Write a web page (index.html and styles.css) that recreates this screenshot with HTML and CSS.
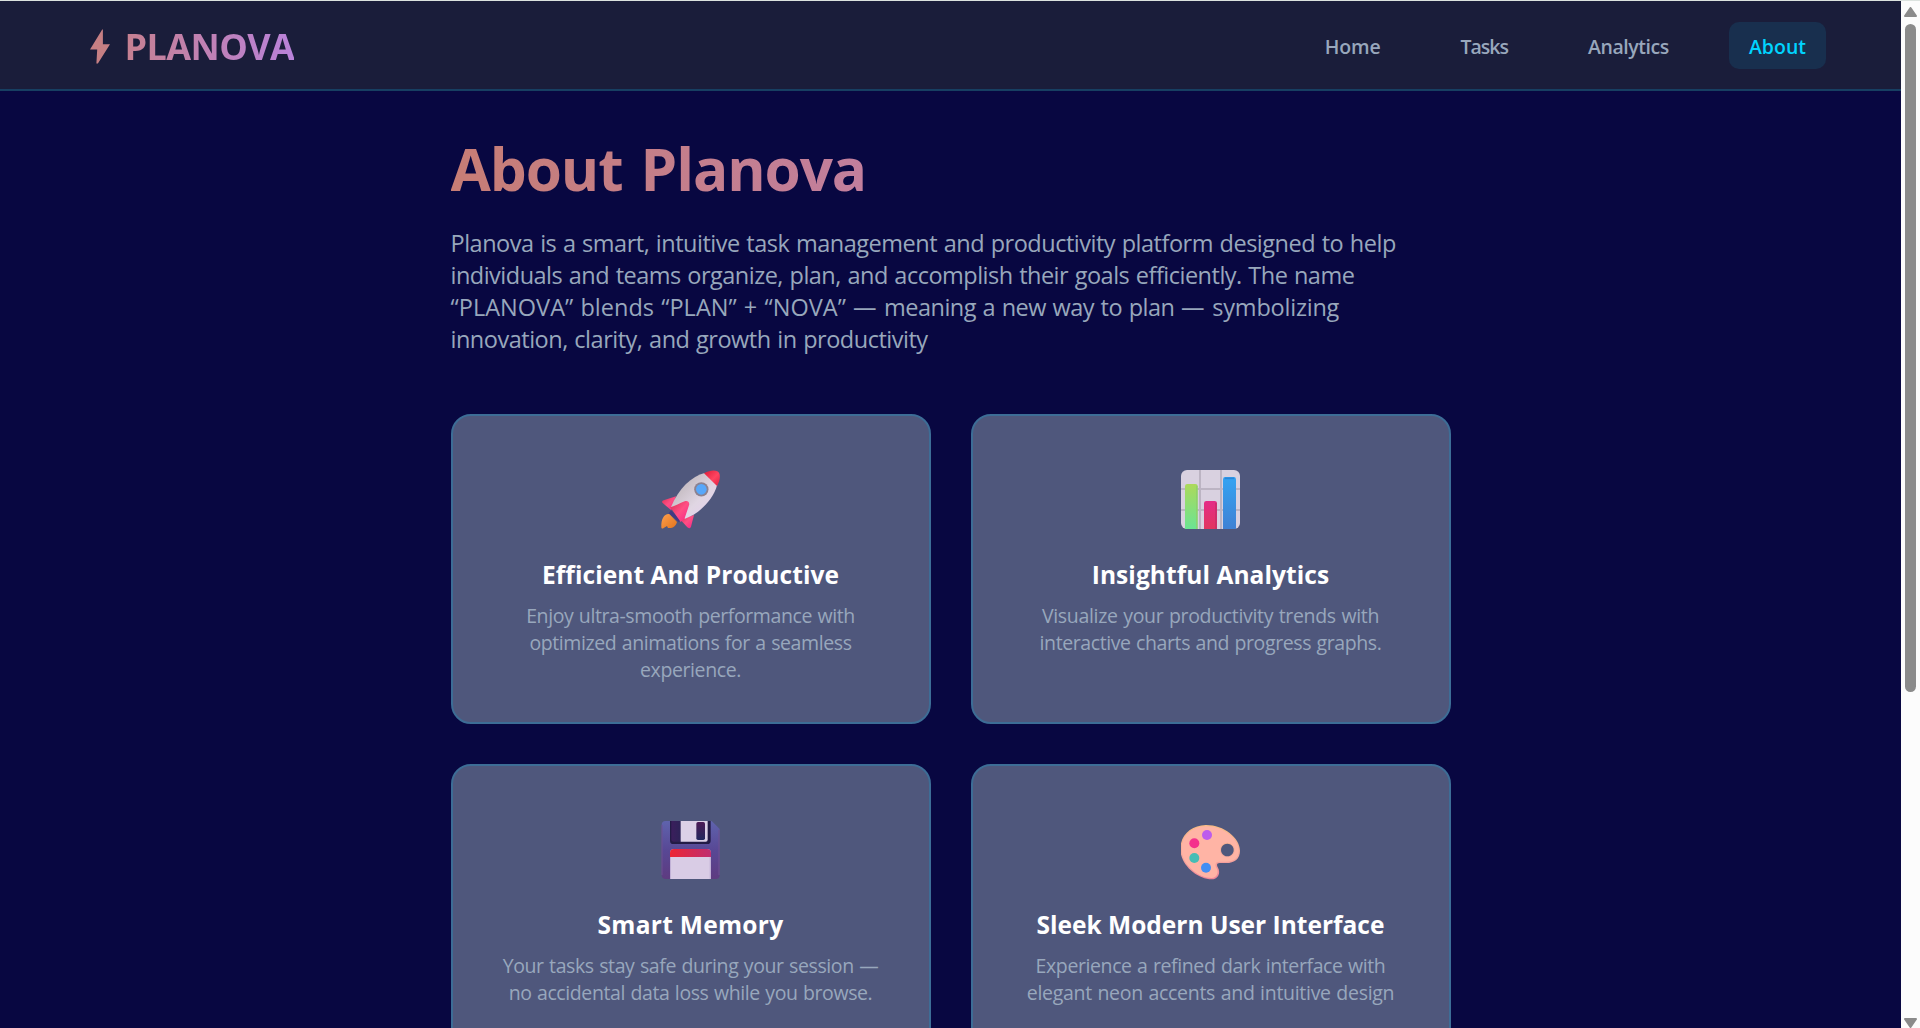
FILE: index.html
```html
<!DOCTYPE html>
<html lang="en">
<head>
<meta charset="utf-8">
<title>Planova</title>
<link rel="stylesheet" href="styles.css">
</head>
<body>
<div class="viewport">
  <div class="page">
    <header class="navbar">
      <div class="brand">
        <svg class="brand-bolt" viewBox="0 0 20 36"><path d="M12.2.6 0 20.6h7.2L6.400 34.600h1.500L20 15.200h-7.100V.6z" fill="#c67f83"/></svg>
        <span class="brand-name">PLANOVA</span>
      </div>
      <nav class="links">
        <a class="link link-home">Home</a>
        <a class="link link-tasks">Tasks</a>
        <a class="link link-analytics">Analytics</a>
        <a class="link link-about active">About</a>
      </nav>
    </header>
    <main class="about">
      <h1 class="heading">About Planova</h1>
      <p class="intro">
        Planova is a smart, intuitive task management and productivity platform designed to help<br>
        <span class="intro-goals">individuals and teams organize, plan, and accomplish their goals efficiently. The name</span><br>
        <span class="intro-name">“PLANOVA” blends “PLAN” + “NOVA” </span><span class="dash">—</span><span class="intro-meaning"> meaning a new way to plan </span><span class="dash">—</span><span class="intro-symbol"> symbolizing</span><br>
        innovation, clarity, and growth in productivity
      </p>
      <section class="cards">
        <article class="card">
          <svg class="icon" viewBox="63 60 180 180">
            <defs>
              <linearGradient id="hull" x1="0" y1="0" x2="1" y2="1"><stop offset=".25" stop-color="#c5bcc2"/><stop offset=".6" stop-color="#e0d6e3"/><stop offset="1" stop-color="#e6cff0"/></linearGradient>
              <linearGradient id="fin" x1="0" y1="0" x2="1" y2="1"><stop offset="0" stop-color="#d92f52"/><stop offset=".5" stop-color="#ff4f84"/><stop offset="1" stop-color="#f52588"/></linearGradient>
              <linearGradient id="nose" x1="0" y1="0" x2="1" y2="1"><stop offset="0" stop-color="#dc1d38"/><stop offset=".55" stop-color="#ff4460"/><stop offset="1" stop-color="#df2142"/></linearGradient>
              <linearGradient id="flame" x1="0" y1="0" x2="1" y2="1"><stop offset="0" stop-color="#ffa04c"/><stop offset="1" stop-color="#e0731c"/></linearGradient>
            </defs>
            <path d="M88 192c-15-2-25 14-24 40 0 4 4 5 7 2l10-6 3 6c13 2 24-5 27-18z" fill="url(#flame)"/>
            <path d="M86 190l30 26 7-5-30-30z" fill="#413a83"/>
            <path d="M108 139l-37 12c-5 2-6 5-3 8l26 22z" fill="url(#fin)"/>
            <path d="M162 195l-9 35c-2 5-7 6-11 2l-22-24z" fill="url(#fin)"/>
            <path d="M194 69c-38 9-78 46-101 102l42 35c42-14 85-57 96-100-4-18-17-32-37-37z" fill="url(#hull)"/>
            <path d="M192 70c16-9 32-10 40-6 10 4 11 25-1 44z" fill="url(#nose)"/>
            <path d="M91 172c15-4 28-12 43-18 9-3 16 3 13 12l-13 39-12 11z" fill="url(#fin)"/>
            <circle cx="184" cy="118" r="21.500" fill="#8c8291"/>
            <circle cx="184" cy="118" r="16" fill="#58a7fa"/>
          </svg>
          <h2 class="title title-efficient">Efficient And Productive</h2>
          <p class="desc">Enjoy ultra-smooth performance with<br>optimized animations for a seamless<br>experience.</p>
        </article>
        <article class="card">
          <svg class="icon" viewBox="63 60 180 180">
            <defs>
              <linearGradient id="green" x2="0" y2="1"><stop stop-color="#acd95b"/><stop offset="1" stop-color="#6be493"/></linearGradient>
              <linearGradient id="pink" x2="0" y2="1"><stop stop-color="#e42c87"/><stop offset="1" stop-color="#e1365f"/></linearGradient>
              <linearGradient id="blue" x2="0" y2="1"><stop stop-color="#34a3f2"/><stop offset="1" stop-color="#3f81d4"/></linearGradient>
            </defs>
            <rect x="63" y="60" width="177" height="177" rx="18" fill="#d9d1e0"/>
            <path d="M120 60v177M183 60v177M63 117h177M63 180h177" stroke="#bcb4c3" stroke-width="6"/>
            <path d="M75 237V109q0-7 7-7h24q7 0 7 7v128z" fill="url(#green)"/>
            <path d="M132 237v-77q0-7 7-7h25q7 0 7 7v77z" fill="url(#pink)"/>
            <path d="M189 237V88q0-7 7-7h25q7 0 7 7v149z" fill="url(#blue)"/>
            <path d="M110.500 107v130" stroke="#8fd06b" stroke-width="4"/>
            <path d="M168 158v79" stroke="#c62d68" stroke-width="4"/>
            <path d="M194 85h29" stroke="#2a86d9" stroke-width="5"/>
          </svg>
          <h2 class="title title-insightful">Insightful Analytics</h2>
          <p class="desc"><span class="desc-trends">Visualize your productivity trends with</span><br>interactive charts and progress graphs.</p>
        </article>
        <article class="card">
          <svg class="icon" viewBox="63 60 180 180">
            <defs>
              <linearGradient id="disk" x2="0" y2="1"><stop stop-color="#5f63ad"/><stop offset=".5" stop-color="#584895"/><stop offset="1" stop-color="#5e3b80"/></linearGradient>
              <linearGradient id="label"><stop stop-color="#ed2534"/><stop offset="1" stop-color="#bf2d70"/></linearGradient>
              <linearGradient id="shutter"><stop stop-color="#3b1e5c"/><stop offset="1" stop-color="#2c2357"/></linearGradient>
              <linearGradient id="slot" x2="0" y2="1"><stop stop-color="#4c1a55"/><stop offset="1" stop-color="#22285e"/></linearGradient>
            </defs>
            <path d="M77 63h138l24 24v138q0 12-12 12H77q-12 0-12-12V75q0-12 12-12z" fill="url(#disk)"/>
            <path d="M66 75v150M237 90v135" stroke="#6d5191" stroke-width="3"/>
            <path d="M90 63h122v59q0 10-10 10H100q-10 0-10-10z" fill="#231b46"/>
            <path d="M94 63h30v62h-22q-8 0-8-8z" fill="url(#shutter)"/>
            <path d="M122 63h81v56q0 6-6 6h-75z" fill="#dcd1e7"/>
            <rect x="169" y="66" width="26" height="54" rx="5" fill="url(#slot)"/>
            <path d="M90 237v-78q0-12 12-12h99q12 0 12 12v78z" fill="#c1b1d6"/>
            <path d="M90 171v-12q0-12 12-12h99q12 0 12 12v12z" fill="url(#label)"/>
            <path d="M93 171h116v66H93z" fill="#d9cce5"/>
          </svg>
          <h2 class="title title-memory">Smart Memory</h2>
          <p class="desc">Your tasks stay safe during your session —<br>no accidental data loss while you browse.</p>
        </article>
        <article class="card">
          <svg class="icon" viewBox="63 60 180 180">
            <defs>
              <linearGradient id="rim" x2="0" y2="1"><stop stop-color="#f8bc84"/><stop offset=".6" stop-color="#f5a79d"/><stop offset="1" stop-color="#ee8599"/></linearGradient>
            </defs>
            <path fill-rule="evenodd" d="M137 75c53-1 103 38 103 77 0 24-16 37-42 37h-19c-9 0-10 7-5 14 8 14 2 35-19 35-42 0-94-42-94-91 0-43 34-71 76-72zM202 131a19 19 0 1 0 .1 0z" fill="url(#rim)"/>
            <path fill-rule="evenodd" d="M137 79c51-1 99 36 99 73 0 22-15 33-38 33h-20c-13 0-14 11-8 20 7 12 1 29-15 29-40 0-90-40-90-87 0-40 32-67 72-68zM202 128a22 22 0 1 0 .1 0z" fill="#ffb4a5"/>
            <circle cx="141" cy="105" r="15" fill="#bd5cec"/>
            <circle cx="103" cy="130" r="15" fill="#f4318c"/>
            <circle cx="103" cy="174" r="15" fill="#45bdb5"/>
            <circle cx="138" cy="203" r="15" fill="#438ef3"/>
          </svg>
          <h2 class="title title-interface">Sleek Modern User Interface</h2>
          <p class="desc">Experience a refined dark interface with<br><span class="desc-neon">elegant neon accents and intuitive design</span></p>
        </article>
      </section>
    </main>
  </div>
  <div class="scrollbar">
    <svg class="arrow" viewBox="0 0 13 10"><path d="M6.500 1 12 9H1z" fill="#8b8b8b" stroke="#8b8b8b" stroke-width="2" stroke-linejoin="round"/></svg>
    <div class="thumb"></div>
    <svg class="arrow arrow-down" viewBox="0 0 13 10"><path d="M6.500 9 12 1H1z" fill="#8b8b8b" stroke="#8b8b8b" stroke-width="2" stroke-linejoin="round"/></svg>
  </div>
</div>
</body>
</html>
```

FILE: styles.css
```css
* { box-sizing: border-box; margin: 0; padding: 0; }
body { height: 1028px; overflow: hidden; background: #080741; font-family: "Open Sans", "Noto Sans", sans-serif; }
.viewport { display: flex; height: 1028px; border-top: 1px solid #dce3df; }
.page { flex: 1; overflow: hidden; background: #080741; }

.navbar { display: flex; justify-content: space-between; align-items: center; height: 90px; padding: 0 75px 0 90px; background: #1a1d3a; border-bottom: 2px solid #173f62; }
.brand { display: flex; align-items: center; gap: 14.5px; padding-top: 4px; }
.brand-bolt { width: 20px; height: 36px; }
.brand-name { font-size: 36px; font-weight: 700; line-height: 48px; letter-spacing: -0.6px; background: linear-gradient(90deg, #c68091, #b982da); -webkit-background-clip: text; background-clip: text; color: transparent; }
.links { display: flex; gap: 40px; margin-top: 1px; }
.link { padding: 11px 20px 9px; border-radius: 10px; color: #98a7bc; font-size: 19.5px; font-weight: 600; line-height: 27px; }
.link-home { letter-spacing: -0.2px; }
.link-tasks { letter-spacing: -1px; }
.link-analytics { letter-spacing: -0.42px; }
.link.active { background: #182f4e; color: #00d4ff; }

.about { width: 1000px; margin: 0 auto; padding-top: 37px; }
.heading { font-size: 58.5px; font-weight: 700; line-height: 80px; letter-spacing: -1.1px; word-spacing: 4px; background: linear-gradient(90deg, #c77d75, #bb82d7); -webkit-background-clip: text; background-clip: text; color: transparent; }
.intro { margin-top: 19px; color: #98a7bc; font-size: 23.5px; line-height: 32px; letter-spacing: -0.49px; word-spacing: 1px; white-space: nowrap; }
.intro-goals { letter-spacing: -0.51px; }
.intro-name { letter-spacing: 0.03px; }
.intro-meaning { letter-spacing: -0.52px; }
.intro-symbol { letter-spacing: -0.22px; }
.dash { letter-spacing: 1px; }

.cards { display: grid; grid-template-columns: 480px 480px; gap: 40px; margin-top: 59px; }
.card { height: 310px; padding-top: 54px; border: 2px solid #3d6d96; border-radius: 20px; background: #4f577c; text-align: center; }
.icon { display: block; width: 60px; height: 60px; margin: 0 auto; }
.title { margin-top: 28px; color: #fff; font-size: 24.5px; font-weight: 700; line-height: 34px; }
.title-efficient { letter-spacing: 0.08px; }
.title-insightful { letter-spacing: 0.08px; }
.title-memory { letter-spacing: 0.3px; }
.title-interface { letter-spacing: 0; }
.desc { margin-top: 10px; color: #98a7bc; font-size: 19.5px; line-height: 27px; letter-spacing: -0.4px; word-spacing: 0.8px; white-space: nowrap; }
.desc-trends { letter-spacing: -0.32px; }
.desc-neon { letter-spacing: -0.29px; }

.scrollbar { display: flex; flex-direction: column; align-items: center; width: 19px; padding-top: 6px; background: #fcfcfc; }
.arrow { width: 13px; height: 10px; }
.arrow-down { margin-top: auto; }
.thumb { width: 11px; height: 668px; margin-top: 7px; border-radius: 6px; background: #8b8b8b; }
```
